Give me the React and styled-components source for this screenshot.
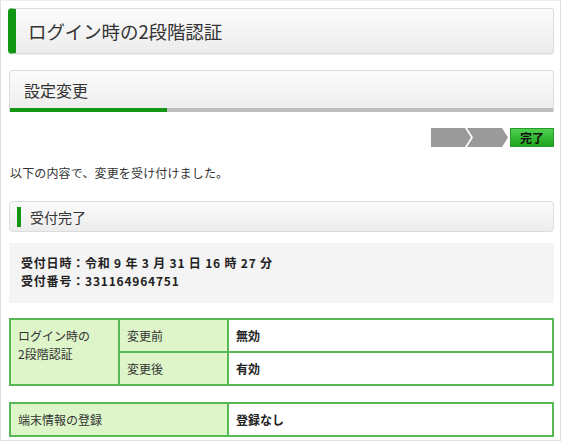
import React from "react";
import styled, { createGlobalStyle } from "styled-components";

const Global = createGlobalStyle`
  html, body { margin: 0; padding: 0; background: #fff; }
  body { font-family: "Noto Sans CJK JP", "Noto Sans", sans-serif; color: #333; }
`;

const Frame = styled.div`
  box-sizing: border-box;
  width: 561px;
  height: 441px;
  border: 1px solid #dedede;
  border-top-color: #eee;
  padding: 7px 6px 0 8px;
  overflow: hidden;
`;

const TitleBox = styled.div`
  box-sizing: border-box;
  height: 46px;
  margin-left: -1px;
  display: flex;
  align-items: center;
  border: 1px solid #dcdcdc;
  border-left: 8px solid #139613;
  border-radius: 4px;
  background: linear-gradient(#fcfcfc, #ececec);
  box-shadow: 0 1px 1px rgba(0,0,0,0.08);
  padding-left: 12px;
  font-size: 18.5px;
  letter-spacing: -0.1px;
  color: #333;
`;

const SectionBox = styled.div`
  box-sizing: border-box;
  margin-top: 16px;
  border: 1px solid #dcdcdc;
  border-bottom: none;
  border-radius: 4px 4px 0 0;
  background: linear-gradient(#fcfcfc, #ececec);
  overflow: hidden;
`;

const SectionLabel = styled.div`
  height: 37px;
  display: flex;
  align-items: center;
  padding-left: 14px;
  font-size: 16px;
  color: #333;
`;

const Progress = styled.div`
  height: 4px;
  background: #bdbdbd;
  display: flex;
`;

const ProgressFill = styled.div`
  height: 100%;
  background: #139613;
`;

const Steps = styled.div`
  display: flex;
  justify-content: flex-end;
  align-items: center;
  margin-top: 16px;
  height: 19px;
`;

const Step = styled.div`
  height: 19px;
  width: ${(p) => p.$w}px;
  margin-left: ${(p) => p.$ml || 0}px;
  background: #9a9a9a;
  clip-path: ${(p) =>
    p.$notch
      ? "polygon(0 0, calc(100% - 6px) 0, 100% 50%, calc(100% - 6px) 100%, 0 100%, 6px 50%)"
      : "polygon(0 0, calc(100% - 6px) 0, 100% 50%, calc(100% - 6px) 100%, 0 100%)"};
`;

const StepActive = styled.div`
  box-sizing: border-box;
  height: 19px;
  width: 44px;
  margin-left: 2px;
  display: flex;
  align-items: center;
  justify-content: center;
  background: linear-gradient(#4fcf4f, #1ea51e);
  border: 1px solid #2a9a2a;
  font-size: 12px;
  font-weight: bold;
  color: #111;
`;

const Message = styled.p`
  margin: 17px 0 0 1px;
  font-size: 12px;
  line-height: 18px;
  letter-spacing: 0.15px;
  color: #333;
`;

const SubHead = styled.div`
  box-sizing: border-box;
  margin-top: 19px;
  height: 31px;
  display: flex;
  align-items: center;
  border: 1px solid #dcdcdc;
  border-radius: 4px;
  background: linear-gradient(#fcfcfc, #ececec);
  padding-left: 7px;
  font-size: 14px;
  color: #333;
`;

const SubBar = styled.span`
  width: 4px;
  height: 20px;
  background: #139613;
  margin-right: 9px;
`;

const InfoBox = styled.div`
  margin-top: 11px;
  background: #f4f4f4;
  border-radius: 2px;
  padding: 11px 12px 13px;
  font-size: 12px;
  font-weight: bold;
  line-height: 18px;
  letter-spacing: 0.8px;
  color: #222;
`;

const Table = styled.table`
  width: 100%;
  border-collapse: collapse;
  margin-top: ${(p) => p.$mt}px;
  font-size: 12px;
  color: #333;
`;

const Th = styled.td`
  background: #ddf5c8;
  border: 2px solid #56b956;
  padding: ${(p) => (p.$top ? "7px 7px" : "0 7px")};
  height: 31px;
  box-sizing: border-box;
  vertical-align: ${(p) => (p.$top ? "top" : "middle")};
  line-height: 18px;
  width: ${(p) => p.$w || "auto"};
  text-align: left;
  font-weight: normal;
`;

const Td = styled.td`
  background: #fff;
  border: 2px solid #56b956;
  padding: 0 7px;
  height: 31px;
  font-weight: bold;
  color: #222;
  line-height: 18px;
`;

export default function App() {
  return (
    <>
      <Global />
      <Frame>
        <TitleBox>ログイン時の2段階認証</TitleBox>
        <SectionBox>
          <SectionLabel>設定変更</SectionLabel>
          <Progress>
            <ProgressFill style={{ width: "157px" }} />
          </Progress>
        </SectionBox>
        <Steps>
          <Step $w={40} />
          <Step $w={41} $ml={-4} $notch />
          <StepActive>完了</StepActive>
        </Steps>
        <Message>以下の内容で、変更を受け付けました。</Message>
        <SubHead>
          <SubBar />
          受付完了
        </SubHead>
        <InfoBox>
          <div>受付日時：令和 9 年 3 月 31 日 16 時 27 分</div>
          <div>受付番号：331164964751</div>
        </InfoBox>
        <Table $mt={15}>
          <tbody>
            <tr>
              <Th rowSpan={2} $top $w="109px">
                ログイン時の
                <br />
                2段階認証
              </Th>
              <Th $w="109px">変更前</Th>
              <Td>無効</Td>
            </tr>
            <tr>
              <Th>変更後</Th>
              <Td>有効</Td>
            </tr>
          </tbody>
        </Table>
        <Table $mt={16}>
          <tbody>
            <tr>
              <Th $w="218px">端末情報の登録</Th>
              <Td>登録なし</Td>
            </tr>
          </tbody>
        </Table>
      </Frame>
    </>
  );
}
